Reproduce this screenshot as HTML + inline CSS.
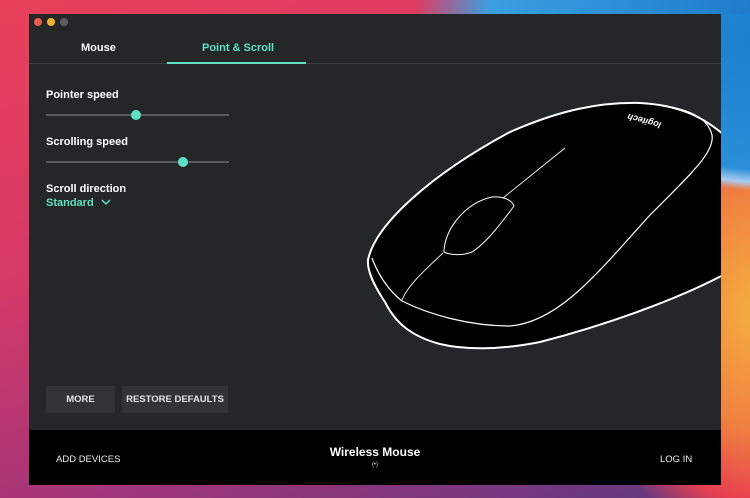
<!DOCTYPE html>
<html><head><style>
*{margin:0;padding:0;box-sizing:border-box}
body{width:750px;height:498px;overflow:hidden;position:relative;font-family:"Liberation Sans",sans-serif;
background:linear-gradient(160deg,#e8405a 0%,#d83a66 35%,#a0357a 70%,#5a3a80 100%)}
.bg2{position:absolute;right:0;top:0;width:750px;height:498px;
background:radial-gradient(ellipse 300px 210px at 770px 40px,#1a7fd0 0%,#2a8fd8 62%,#a8ccf0 68%,transparent 72%),
radial-gradient(ellipse 180px 240px at 760px 310px,#f5b040 0%,#f08040 50%,#e84050 80%,transparent 100%)}
.bg3{position:absolute;left:380px;top:0;width:370px;height:14px;background:linear-gradient(100deg,transparent 10%,#3aa0e0 30%,#1f7ccc 100%)}
.win{position:absolute;left:29px;top:14px;width:692px;height:471px;background:#252628;overflow:hidden}
.dot{position:absolute;top:4px;width:8px;height:8px;border-radius:50%}
.tab{position:absolute;top:27px;font-size:11px;font-weight:bold;color:#fff}
.lbl{position:absolute;left:17px;font-size:11px;font-weight:bold;color:#fff}
.track{position:absolute;left:17px;height:2px;background:#5a5b5d}
.knob{position:absolute;width:10px;height:10px;border-radius:50%;background:#5ee0c3}
.btn{position:absolute;top:372px;height:27px;background:#323335;color:#e4e4e4;font-size:9.5px;text-align:center;line-height:28px;font-weight:bold}
.foot{position:absolute;left:0;top:416px;width:692px;height:55px;background:#000}
</style></head><body>
<div class="bg2"></div><div class="bg3"></div>
<div class="win">
<div class="dot" style="left:5px;background:#ed5a50"></div>
<div class="dot" style="left:18px;background:#f4b033"></div>
<div class="dot" style="left:31px;background:#5c5c5e"></div>
<div class="tab" style="left:52px;top:28px">Mouse</div>
<div class="tab" style="left:173px;top:28px;color:#5ee0c3">Point &amp; Scroll</div>
<div style="position:absolute;left:0;top:49px;width:692px;height:1px;background:#3d3e40"></div>
<div style="position:absolute;left:138px;top:48px;width:139px;height:2px;background:#5ee0c3"></div>
<div class="lbl" style="top:75px">Pointer speed</div>
<div class="track" style="top:100px;width:183px"></div>
<div class="knob" style="left:102px;top:96px"></div>
<div class="lbl" style="top:122px">Scrolling speed</div>
<div class="track" style="top:147px;width:183px"></div>
<div class="knob" style="left:149px;top:143px"></div>
<div class="lbl" style="top:169px">Scroll direction</div>
<div class="lbl" style="top:183px;color:#5ee0c3">Standard <svg width="10" height="7" viewBox="0 0 10 7" style="margin-left:4px"><path d="M1 1 L5 5 L9 1" stroke="#5ee0c3" stroke-width="1.5" fill="none"/></svg></div>
<svg style="position:absolute;left:0;top:0" width="692" height="471" viewBox="29 14 692 471">
<path d="M368 260 C375 225 430 175 510 132 C560 110 600 102 640 103 C680 105 705 118 725 136 L725 274 C680 298 610 324 540 342 C500 350 465 350 440 344 C410 336 395 322 385 302 C375 287 367 272 368 260 Z" fill="#000" stroke="#fff" stroke-width="2"/>
<path d="M372 258 C378 275 390 292 402 301 C430 315 470 326 510 326 C560 322 600 270 650 215 C690 175 715 152 712 135 C708 118 690 108 650 104" fill="none" stroke="#fff" stroke-width="1.2"/>
<path d="M565 148 L503 198" stroke="#fff" stroke-width="0.9"/>
<path d="M444 250 C446 228 465 203 492 197 C503 196 512 200 514 206 C500 225 486 243 472 252 C462 256 450 255 444 252 Z" fill="none" stroke="#fff" stroke-width="1"/>
<path d="M443 253 C425 270 408 285 402 300" fill="none" stroke="#fff" stroke-width="0.9"/>
<text x="0" y="0" transform="translate(645,118) rotate(195)" fill="#fff" font-size="9" font-style="italic" font-weight="bold" text-anchor="middle">logitech</text>
</svg>
<div class="btn" style="left:17px;width:69px">MORE</div>
<div class="btn" style="left:93px;width:106px">RESTORE DEFAULTS</div>
<div class="foot">
<div style="position:absolute;left:27px;top:24px;color:#eee;font-size:9.5px">ADD DEVICES</div>
<div style="position:absolute;left:0;width:692px;top:15px;text-align:center;color:#fff;font-size:12px;font-weight:bold">Wireless Mouse</div>
<div style="position:absolute;left:0;width:692px;top:32px;text-align:center;color:#ccc;font-size:6px">(•)</div>
<div style="position:absolute;left:631px;top:24px;color:#eee;font-size:9.5px">LOG IN</div>
</div>
</div>
</body></html>
